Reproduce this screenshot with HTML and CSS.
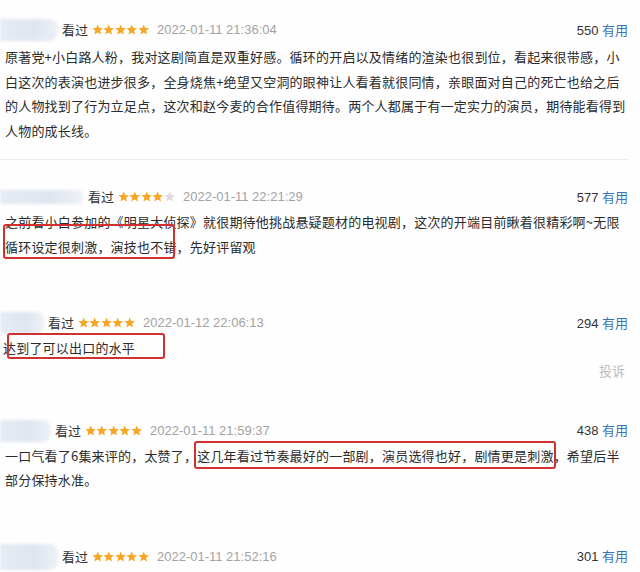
FILE: index.html
```html
<!DOCTYPE html>
<html lang="zh-CN">
<head>
<meta charset="utf-8">
<title>短评</title>
<link rel="stylesheet" href="styles.css">
</head>
<body>
<svg class="defs" width="0" height="0" aria-hidden="true">
  <symbol id="star" viewBox="0 0 10 10">
    <polygon points="5,0.4 6.3,3.5 9.7,3.7 7.1,5.9 7.9,9.3 5,7.5 2.1,9.3 2.9,5.9 0.3,3.7 3.7,3.5"/>
  </symbol>
</svg>
<main class="list">

  <section class="review r1">
    <div class="head">
      <span class="avatar av1"></span>
      <span class="who">看过</span>
      <span class="stars"><svg><use href="#star"/></svg><svg><use href="#star"/></svg><svg><use href="#star"/></svg><svg><use href="#star"/></svg><svg><use href="#star"/></svg></span>
      <span class="time">2022-01-11 21:36:04</span>
      <span class="votes">550 <a class="useful">有用</a></span>
    </div>
    <p class="text">原著党+小白路人粉，我对这剧简直是双重好感。循环的开启以及情绪的渲染也很到位，看起来很带感，小<br>白这次的表演也进步很多，全身烧焦+绝望又空洞的眼神让人看着就很同情，亲眼面对自己的死亡也给之后<br>的人物找到了行为立足点，这次和赵今麦的合作值得期待。两个人都属于有一定实力的演员，期待能看得到<br>人物的成长线。</p>
  </section>

  <section class="review r2">
    <div class="head">
      <span class="avatar av2"></span>
      <span class="who">看过</span>
      <span class="stars"><svg><use href="#star"/></svg><svg><use href="#star"/></svg><svg><use href="#star"/></svg><svg><use href="#star"/></svg><svg class="off"><use href="#star"/></svg></span>
      <span class="time">2022-01-11 22:21:29</span>
      <span class="votes">577 <a class="useful">有用</a></span>
    </div>
    <p class="text">之前看小白参加的《明星大侦探》就很期待他挑战悬疑题材的电视剧，这次的开端目前瞅着很精彩啊~无限<br><span class="mark m2">循环设定很刺激，演技也不错</span>，先好评留观</p>
  </section>

  <section class="review r3">
    <div class="head">
      <span class="avatar av3"></span>
      <span class="who">看过</span>
      <span class="stars"><svg><use href="#star"/></svg><svg><use href="#star"/></svg><svg><use href="#star"/></svg><svg><use href="#star"/></svg><svg><use href="#star"/></svg></span>
      <span class="time">2022-01-12 22:06:13</span>
      <span class="votes">294 <a class="useful">有用</a></span>
    </div>
    <p class="text"><span class="mark m3">达到了可以出口的水平</span></p>
    <div class="foot"><a class="report">投诉</a></div>
  </section>

  <section class="review r4">
    <div class="head">
      <span class="avatar av4"></span>
      <span class="who">看过</span>
      <span class="stars"><svg><use href="#star"/></svg><svg><use href="#star"/></svg><svg><use href="#star"/></svg><svg><use href="#star"/></svg><svg><use href="#star"/></svg></span>
      <span class="time">2022-01-11 21:59:37</span>
      <span class="votes">438 <a class="useful">有用</a></span>
    </div>
    <p class="text">一口气看了6集来评的，太赞了，<span class="mark m4">这几年看过节奏最好的一部剧，演员选得也好，剧情更是刺激</span>，希望后半<br>部分保持水准。</p>
  </section>

  <section class="review r5">
    <div class="head">
      <span class="avatar av5"></span>
      <span class="who">看过</span>
      <span class="stars"><svg><use href="#star"/></svg><svg><use href="#star"/></svg><svg><use href="#star"/></svg><svg><use href="#star"/></svg><svg><use href="#star"/></svg></span>
      <span class="time">2022-01-11 21:52:16</span>
      <span class="votes">301 <a class="useful">有用</a></span>
    </div>
  </section>

</main>
</body>
</html>
```

FILE: styles.css
```css
html, body {
  margin: 0;
  padding: 0;
  background: #fefefe;
}
body {
  width: 640px;
  height: 572px;
  overflow: hidden;
  font-family: "Liberation Sans", "Noto Sans CJK SC", sans-serif;
  color: #333;
}
.defs {
  position: absolute;
  width: 0;
  height: 0;
}
.list {
  display: flex;
  flex-direction: column;
}
.review {
  padding: 0 12px 0 0;
}
.r1 { padding-top: 18px; padding-bottom: 16px; border-bottom: 1px solid #ececec; margin-right: 12px; padding-right: 0; }
.r2 { padding-top: 25px; }
.r3 { padding-top: 52px; }
.r4 { padding-top: 38px; }
.r5 { padding-top: 52px; }

.head {
  display: flex;
  align-items: center;
  height: 24px;
  font-size: 13px;
  line-height: 24px;
}
.avatar {
  display: block;
  height: 22px;
  background: linear-gradient(90deg, #e6ebf3 0%, #dfe6f0 60%, #eef1f6 100%);
  border-radius: 0 8px 8px 0;
  filter: blur(1.5px);
  margin-right: 4px;
  flex: none;
}
.av1 { width: 58px; }
.av2 { width: 84px; height: 14px; }
.av3 { width: 44px; }
.av4 { width: 51px; }
.av5 { width: 58px; height: 26px; }

.who {
  font-family: "Noto Sans CJK SC", sans-serif;
  color: #333;
  font-size: 13px;
}
.stars {
  display: flex;
  gap: 0;
  margin-left: 4px;
  margin-right: 8px;
}
.stars svg {
  width: 11.4px;
  height: 11.4px;
  fill: #f6a623;
}
.stars svg.off {
  fill: #dcdcdc;
}
.time {
  color: #a3a3a3;
  font-size: 13px;
}
.votes {
  margin-left: auto;
  color: #333;
  font-size: 13px;
}
.useful {
  color: #3b74b5;
  font-family: "Noto Sans CJK SC", sans-serif;
}

.text {
  margin: 1px 0 0 0;
  padding-left: 5px;
  font-family: "Noto Sans CJK SC", sans-serif;
  font-size: 13px;
  letter-spacing: 0.2px;
  line-height: 24.5px;
  color: #2b2b2b;
  white-space: nowrap;
}
.r1 .text { margin-top: 3px; }
.r3 .text { padding-left: 3px; }

.mark {
  position: relative;
}
.mark::after {
  content: "";
  position: absolute;
  border: 2px solid #d22f2f;
  border-radius: 3px;
}
.m2::after { left: -2px; right: 2px; top: -13px; bottom: -3px; }
.m3::after { left: 4px; right: -30px; top: -5px; bottom: -2px; }
.m4::after { left: -3px; right: -2px; top: -5px; bottom: -4px; }

.foot {
  display: flex;
  justify-content: flex-end;
  height: 20px;
  line-height: 20px;
  padding-right: 3px;
}
.report {
  color: #bdbdbd;
  font-family: "Noto Sans CJK SC", sans-serif;
  font-size: 13px;
}
```
